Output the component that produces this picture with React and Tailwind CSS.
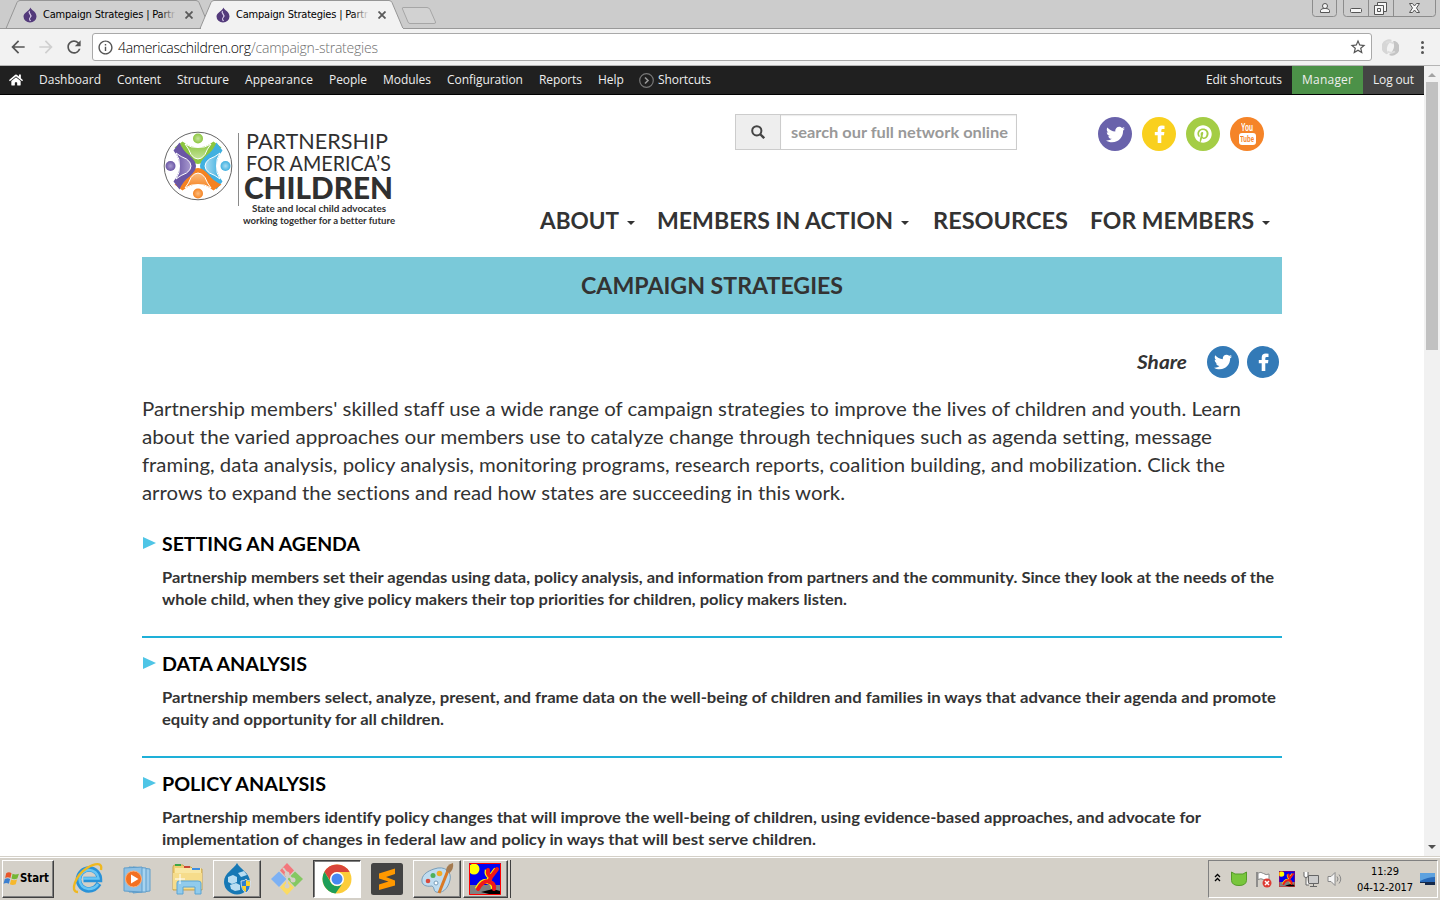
import { useLayoutEffect, useRef } from "react";
import { FaTwitter, FaPinterest, FaHome } from "react-icons/fa";
import { MdRefresh, MdArrowBack, MdArrowForward, MdStarBorder, MdInfoOutline } from "react-icons/md";

/* A single line of text whose tracking is adjusted to fill a given width. */
function Fit({ w, children, className = "" }) {
  const ref = useRef(null);
  useLayoutEffect(() => {
    const el = ref.current;
    el.style.letterSpacing = "0px";
    const natural = el.getBoundingClientRect().width;
    const gap = (w - natural) / (children.length - 1);
    el.style.letterSpacing = `${gap}px`;
    el.style.marginRight = `${-gap}px`;
  }, [w, children]);
  return (
    <span ref={ref} className={`inline-block whitespace-pre ${className}`}>
      {children}
    </span>
  );
}

/* A single line of text whose letters are widened or narrowed to a given width. */
function Stretch({ w, children, className = "" }) {
  const ref = useRef(null);
  useLayoutEffect(() => {
    const el = ref.current;
    el.style.transform = "none";
    const natural = el.getBoundingClientRect().width;
    el.style.transform = `scaleX(${w / natural})`;
    el.style.marginRight = `${w - natural}px`;
  }, [w, children]);
  return (
    <span ref={ref} className={`inline-block origin-left whitespace-pre shrink-0 [font-variant-ligatures:none] ${className}`}>
      {children}
    </span>
  );
}

const TAHOMA = "font-['DejaVu_Sans_Condensed','DejaVu_Sans',sans-serif]";

function Drop() {
  return (
    <svg className="shrink-0" width="14" height="16" viewBox="0 0 14 16">
      <path d="M7.500 0.500C8 3 13.500 4.500 13.500 9.500A6.500 6 0 0 1 .5 9.500C.5 5.500 6 4.500 7.500 .5z" fill="#533a7b" />
      <path d="M6.500 4C4.500 6.500 9.500 7.500 7.500 10S6.500 12 7.500 14" fill="none" stroke="#d9cdea" strokeWidth="1.200" />
    </svg>
  );
}

function TabLabel({ tone }) {
  return (
    <div className="flex h-full w-[190px] items-center pl-[14px]">
      <Drop />
      <div className={`relative ml-1.5 h-4 w-[133px] shrink-0 overflow-hidden text-[11px] leading-4 text-black ${TAHOMA}`}>
        <Fit w={132}>Campaign Strategies | Partr</Fit>
        <div className={`absolute right-0 top-0 h-4 w-4 bg-gradient-to-r from-transparent ${tone}`} />
      </div>
      <svg className="ml-[9px] shrink-0" width="8" height="8" viewBox="0 0 8 8">
        <path d="M.5.5l7 7M7.500.5l-7 7" stroke="#5a5a5a" strokeWidth="1.800" />
      </svg>
    </div>
  );
}

function Browser() {
  return (
    <>
      <div className="relative h-[29px] shrink-0 bg-[#cccccc]">
        <svg className="absolute inset-0" width="1440" height="29" viewBox="0 0 1440 29">
          <path d="M0 28.500H1440" stroke="#999" />
          <path d="M6 28.500L17 2.500Q18 .5 20 .5H196Q198 .5 199 2.500L210 28.500z" fill="#d0d0d0" stroke="#969696" />
          <path d="M200 28.500L211 2.500Q212 .5 214 .5H389Q391 .5 392 2.500L403 28.500z" fill="#f2f2f2" stroke="#969696" />
          <path d="M201 28.500H403" stroke="#f2f2f2" />
          <path d="M403 7.500H427Q429 7.500 430 9.500L435.500 22Q436 23.500 434 23.500H410Q408.500 23.500 408 22L402.500 9Q402 7.500 403 7.500z" fill="#d2d2d2" stroke="#a6a6a6" />
          <g fill="none" stroke="#8c8c8c">
            <path d="M1312.500 0V13.500Q1312.500 16.500 1315.500 16.500H1333.500Q1336.500 16.500 1336.500 13.500V0" />
            <path d="M1343.500 0V13.500Q1343.500 16.500 1346.500 16.500H1432.500Q1435.500 16.500 1435.500 13.500V0M1368.500 0V16.500M1393.500 0V16.500" />
          </g>
          <g fill="#f6f6f6" stroke="#555">
            <path d="M1320.500 12.500V10.500Q1321 8.500 1324 8.500H1326Q1329 8.500 1329.500 10.500V12.500z" />
            <circle cx="1325" cy="6" r="2.500" />
            <rect x="1350.500" y="8.500" width="11" height="4" rx="1" />
            <path d="M1377.500 2.500h9v9h-9z" />
            <path d="M1374.500 5.500h9v9h-9zM1377.500 8.500h3v3h-3z" />
            <path d="M1409.500 3.500h3l2 2.500 2-2.500h3l-3 4.500 3 4.500h-3l-2-2.500-2 2.500h-3l3-4.500z" />
          </g>
        </svg>
        <div className="relative flex h-[29px] pl-[9px]">
          <div className="w-[193px]"><TabLabel tone="to-[#d0d0d0]" /></div>
          <TabLabel tone="to-[#f2f2f2]" />
        </div>
      </div>
      <div className="flex h-[37px] shrink-0 items-center border-b border-[#b5b5b5] bg-[#f2f2f2] text-[#555]">
        <MdArrowBack className="ml-2 size-5" />
        <MdArrowForward className="ml-2 size-5 text-[#cfcfcf]" />
        <MdRefresh className="ml-2 size-5" />
        <div className="ml-2 flex h-7 w-[1280px] items-center rounded-[3px] border border-[#a9a9a9] bg-white pl-1 font-['Open_Sans',sans-serif] text-[14px] font-light">
          <MdInfoOutline className="size-[17px]" />
          <Fit w={133} className="ml-1 text-black">4americaschildren.org</Fit>
          <Fit w={127} className="text-[#6f6f6f]">/campaign-strategies</Fit>
          <MdStarBorder className="ml-auto mr-1 size-[18px]" />
        </div>
        <svg className="ml-[10px]" width="17" height="17" viewBox="0 0 17 17">
          <path d="M10 1A7.500 7.500 0 0 0 4 15Q6 15.500 6 14Q2.500 8 10 1z" fill="#d6d6d6" />
          <path d="M7 16A7.500 7.500 0 0 0 13 2Q11 1.500 11 3Q14.500 9 7 16z" fill="#c4c4c4" />
          <path d="M4 4Q8 2 11.500 4.500M13 12.500Q9 15 5.500 12.500" fill="none" stroke="#dcdcdc" strokeWidth="2" />
        </svg>
        <div className="ml-[22px] flex flex-col gap-[2px]">
          <i className="size-[3px] rounded-full bg-[#555]" />
          <i className="size-[3px] rounded-full bg-[#555]" />
          <i className="size-[3px] rounded-full bg-[#555]" />
        </div>
      </div>
    </>
  );
}

const ADMIN = [
  ["Dashboard", 62],
  ["Content", 44],
  ["Structure", 52],
  ["Appearance", 68],
  ["People", 38],
  ["Modules", 48],
  ["Configuration", 76],
  ["Reports", 43],
  ["Help", 26],
];

function AdminBar() {
  return (
    <div className="flex h-[29px] items-center border-b border-black bg-[#202020] font-['Open_Sans',sans-serif] text-[12px] text-[#eeeeee]">
      <FaHome className="ml-[9px] size-[14px] text-white" />
      {ADMIN.map(([label, w]) => (
        <Fit key={label} w={w} className="ml-4">{label}</Fit>
      ))}
      <svg className="ml-[15px]" width="15" height="15" viewBox="0 0 15 15" fill="none" stroke="#777">
        <circle cx="7.500" cy="7.500" r="6.800" strokeWidth="1.200" />
        <path d="M6 4.500l3 3L6 10.500" stroke="#999" strokeWidth="1.600" />
      </svg>
      <Fit w={53} className="ml-1">Shortcuts</Fit>
      <Fit w={76} className="ml-auto">Edit shortcuts</Fit>
      <div className="ml-[10px] flex h-full w-[71px] items-center justify-center bg-[#4c9148]"><Fit w={51}>Manager</Fit></div>
      <div className="flex h-full w-[61px] items-center justify-center bg-[#444]"><Fit w={41}>Log out</Fit></div>
    </div>
  );
}

function Figure({ turn, id, dark, light }) {
  return (
    <g transform={`rotate(${turn} 35 35)`}>
      <defs>
        <radialGradient id={id}>
          <stop offset="0" stopColor={light} />
          <stop offset="1" stopColor={dark} />
        </radialGradient>
        <linearGradient id={`${id}-body`} x1="0" y1="0" x2="0" y2="1">
          <stop offset="0" stopColor={dark} />
          <stop offset="1" stopColor={light} />
        </linearGradient>
      </defs>
      <circle cx="35" cy="7.500" r="5" fill={`url(#${id})`} />
      <path d="M19.500 10.500Q28 17 35 16Q42 17 50.500 10.500L58.500 16.500Q50 20 46 26Q40 33 35 33Q30 33 24 26Q20 20 11.500 16.500z" fill={dark} />
      <path d="M22 13Q28 17 35 16.500Q42 17 48 13Q44 18 42 23.500Q39 28 35 28Q31 28 28 23.500Q26 18 22 13z" fill={`url(#${id}-body)`} stroke="#fff" strokeWidth="1" />
    </g>
  );
}

function Logo() {
  return (
    <div className="flex pl-[21px] font-['Lato',sans-serif] text-[#303030]">
      <svg className="mt-[36px]" width="70" height="70" viewBox="0 0 70 70">
        <circle cx="35" cy="35" r="33.800" fill="#fff" stroke="#666" />
        <Figure turn={0} id="top" dark="#8cc63f" light="#c5e39b" />
        <Figure turn={90} id="right" dark="#3fb0e0" light="#a9dcf2" />
        <Figure turn={180} id="bottom" dark="#f58220" light="#fbbd80" />
        <Figure turn={270} id="left" dark="#6a56a5" light="#a99bd0" />
      </svg>
      <div className="ml-[5px] mt-[38px] h-[73px] w-px bg-[#8a8a8a]" />
      <div className="ml-1 flex w-[153px] flex-col items-start pt-[34px]">
        <Stretch w={142} className="ml-[3px] h-[23px] text-[22px] leading-[23px]">PARTNERSHIP</Stretch>
        <Stretch w={145} className="ml-[3px] h-[22px] text-[22px] leading-[22px]">FOR AMERICA’S</Stretch>
        <Stretch w={149} className="ml-px h-[26px] text-[30px] font-black leading-[26px]">CHILDREN</Stretch>
        <Stretch w={134} className="ml-[9px] mt-0.5 h-3 text-[10px] font-bold leading-3">State and local child advocates</Stretch>
        <Stretch w={152} className="h-3 text-[10px] font-bold leading-3">working together for a better future</Stretch>
      </div>
    </div>
  );
}

function Caret() {
  return <i className="ml-2 mt-[3px] border-x-4 border-t-4 border-x-transparent border-t-[#333]" />;
}

function Facebook() {
  return (
    <svg width="11" height="19" viewBox="0 0 11 19">
      <path d="M10.500.8V4H8.700Q7.300 4 7.300 5.400V7H10.400L10 10.300H7.300V18H3.700V10.300H.8V7H3.700V4.700Q3.700.6 8 .6z" fill="currentColor" />
    </svg>
  );
}

function Header() {
  return (
    <div className="flex h-[162px]">
      <Logo />
      <div className="ml-auto flex w-[742px] flex-col">
        <div className="flex h-14 items-start pt-[19px]">
          <div className="ml-[195px] flex h-9 w-[282px] border border-[#ccc] bg-white">
            <div className="flex w-[45px] items-center justify-center border-r border-[#ccc] bg-[#eee]">
              <svg width="14" height="14" viewBox="0 0 14 14" fill="none" stroke="#444" strokeWidth="2">
                <circle cx="5.800" cy="5.800" r="4.600" />
                <path d="M9 9l4.200 4.200" strokeWidth="2.400" />
              </svg>
            </div>
            <div className="flex grow items-center pl-[10px] font-['Lato',sans-serif] text-[15px] font-bold text-[#999] shadow-[inset_0_1px_1px_rgba(0,0,0,0.08)]">
              <Stretch w={217}>search our full network online</Stretch>
            </div>
          </div>
          <div className="ml-[81px] mt-[3px] flex gap-[10px] text-white">
            <div className="flex size-[34px] items-center justify-center rounded-full bg-[#6962ab]"><FaTwitter className="size-[19px]" /></div>
            <div className="flex size-[34px] items-center justify-center rounded-full bg-[#f9d01e]"><Facebook /></div>
            <div className="flex size-[34px] items-center justify-center rounded-full bg-[#a4cd45]"><FaPinterest className="size-[18px]" /></div>
            <div className="flex size-[34px] flex-col items-center rounded-full bg-[#f58428] pt-[6px] font-['Liberation_Sans',sans-serif] font-bold">
              <Stretch w={12} className="h-[10px] text-[10px] leading-[10px]">You</Stretch>
              <div className="flex h-[12px] w-[17px] items-center justify-center rounded-[3px] bg-white text-[9.5px] leading-[12px] text-[#f58428]"><Stretch w={14}>Tube</Stretch></div>
            </div>
          </div>
        </div>
        <div className="mt-[55px] flex h-[30px] items-center font-['Lato',sans-serif] text-[22px] font-bold leading-[30px] text-[#333]">
          <Stretch w={79}>ABOUT</Stretch><Caret />
          <Stretch w={236} className="ml-[22px]">MEMBERS IN ACTION</Stretch><Caret />
          <Stretch w={135} className="ml-6">RESOURCES</Stretch>
          <Stretch w={164} className="ml-[22px]">FOR MEMBERS</Stretch><Caret />
        </div>
      </div>
    </div>
  );
}

const INTRO = [
  ["Partnership members' skilled staff use a wide range of campaign strategies to improve the lives of children and youth. Learn", 1099],
  ["about the varied approaches our members use to catalyze change through techniques such as agenda setting, message", 1070],
  ["framing, data analysis, policy analysis, monitoring programs, research reports, coalition building, and mobilization. Click the", 1083],
  ["arrows to expand the sections and read how states are succeeding in this work.", 703],
];

const SECTIONS = [
  {
    title: "SETTING AN AGENDA", w: 198,
    lines: [
      ["Partnership members set their agendas using data, policy analysis, and information from partners and the community. Since they look at the needs of the", 1112],
      ["whole child, when they give policy makers their top priorities for children, policy makers listen.", 685],
    ],
  },
  {
    title: "DATA ANALYSIS", w: 145,
    lines: [
      ["Partnership members select, analyze, present, and frame data on the well-being of children and families in ways that advance their agenda and promote", 1114],
      ["equity and opportunity for all children.", 282],
    ],
  },
  {
    title: "POLICY ANALYSIS", w: 164,
    lines: [
      ["Partnership members identify policy changes that will improve the well-being of children, using evidence-based approaches, and advocate for", 1039],
      ["implementation of changes in federal law and policy in ways that will best serve children.", 654],
    ],
  },
];

function Section({ title, w, lines }) {
  return (
    <div className="h-[120px] border-b-2 border-[#1eb0d8] pt-[14px]">
      <div className="flex h-[25px] items-center text-[18px] font-bold leading-[25px] text-black">
        <i className="mb-[3px] ml-px mr-[6px] border-y-[6.5px] border-l-[13px] border-y-transparent border-l-[#4fc5e6]" />
        <Stretch w={w}>{title}</Stretch>
      </div>
      <div className="mt-[9px] flex flex-col items-start pl-5 text-[15px] font-bold leading-[22px] text-[#333]">
        {lines.map(([t, lw]) => <Stretch key={t} w={lw}>{t}</Stretch>)}
      </div>
    </div>
  );
}

function Page() {
  return (
    <div className="h-[790px] w-[1424px] overflow-hidden bg-white">
      <AdminBar />
      <div className="mx-auto w-[1140px] font-['Lato',sans-serif]">
        <Header />
        <div className="flex h-[57px] items-center justify-center bg-[#7ac9d9] text-[22px] font-bold text-[#333]">
          <Stretch w={262}>CAMPAIGN STRATEGIES</Stretch>
        </div>
        <div className="mt-8 flex h-8 items-center justify-end pr-[3px] text-white">
          <div className="mr-5 pt-0.5 text-[18.5px] font-bold italic text-[#333]"><Stretch w={50}>Share</Stretch></div>
          <div className="mr-2 flex size-8 items-center justify-center rounded-full bg-[#337ab7]"><FaTwitter className="size-[18px]" /></div>
          <div className="flex size-8 items-center justify-center rounded-full bg-[#337ab7]"><Facebook /></div>
        </div>
        <div className="mt-[17px] flex flex-col items-start text-[19.5px] leading-7 text-[#333]">
          {INTRO.map(([t, w]) => <Stretch key={t} w={w}>{t}</Stretch>)}
        </div>
        <div className="mt-[11px]">
          {SECTIONS.map((s) => <Section key={s.title} {...s} />)}
        </div>
      </div>
    </div>
  );
}

function Scrollbar() {
  return (
    <div className="flex w-4 flex-col items-center justify-between bg-[#f1f1f1]">
      <div className="flex flex-col items-center">
        <i className="mb-[5px] mt-[7px] border-x-4 border-b-4 border-x-transparent border-b-[#a3a3a3]" />
        <div className="h-[268px] w-3 bg-[#c1c1c1]" />
      </div>
      <i className="mb-[7px] border-x-4 border-t-4 border-x-transparent border-t-[#505050]" />
    </div>
  );
}

const RAISED = "border border-b-[#404040] border-l-white border-r-[#404040] border-t-white bg-[#d4d0c8] shadow-[inset_-1px_-1px_0_#808080]";

function Runner({ size }) {
  return (
    <svg className="shrink-0" width={size} height={size} viewBox="0 0 32 32">
      <path d="M0 0h32v32H0z" fill="#0000f0" />
      <path d="M0 22h32v10H0z" fill="#808080" />
      <path d="M12 29L24 26L31 28V31H20z" fill="#000" />
      <circle cx="5" cy="6" r="5.500" fill="#ff0" />
      <path d="M18 7Q17 12 21 14L27 6M21 14L19 19Q25 20 24 26M19 18Q12 17 8 26" fill="none" stroke="#ff0" strokeWidth="4.500" />
      <path d="M19 7Q18 12 22 14L28 6M22 14L20 19Q26 20 25 26M20 18Q13 18 9 26" fill="none" stroke="#f01818" strokeWidth="4" strokeLinecap="round" strokeLinejoin="round" />
      <path d="M.5.5h31v31H.5z" fill="none" stroke="#f00" />
    </svg>
  );
}

function Flag() {
  return (
    <svg className="shrink-0" width="17" height="16" viewBox="0 0 16 15">
      <path d="M3 2Q5.500.5 8 2L7 6.500Q4.500 5 2 6.500z" fill="#e8562a" />
      <path d="M9 2.500Q11.500 4 15 2.500L13.500 7Q10.500 8.500 8 7z" fill="#74b735" />
      <path d="M1.700 7.500Q4.300 6 6.700 7.500L5.500 12Q3 10.500.5 12z" fill="#3c80d0" />
      <path d="M7.700 8Q10.500 9.500 13.200 8L12 12.500Q9 14 6.500 12.500z" fill="#f6b82c" />
    </svg>
  );
}

function Taskbar() {
  return (
    <div className="relative flex h-11 shrink-0 items-start border-t border-[#d4d0c8] bg-[#d4d0c8] shadow-[inset_0_1px_0_#fff]">
      <div className={`ml-[2px] mt-[3px] flex h-[38px] w-[52px] items-center ${RAISED} ${TAHOMA}`}>
        <Flag />
        <Stretch w={29} className="text-[11.5px] font-bold text-black">Start</Stretch>
      </div>
      <div className="ml-[17px] flex h-[43px] items-center">
        <svg width="34" height="34" viewBox="0 0 34 34">
          <path d="M28 21.500Q24 28 17.500 28A10.500 10.500 0 1 1 28.500 17.500H12.500" fill="none" stroke="#2992d8" strokeWidth="5.500" />
          <path d="M27 22Q24 27 17.500 27A9.500 9.500 0 1 1 27.500 16.500H12" fill="none" stroke="#68c6f4" strokeWidth="2.500" />
          <path d="M7 30C-2 30 5 13 16 6C24 1 32 0 30 8" fill="none" stroke="#efb820" strokeWidth="2.400" />
        </svg>
      </div>
      <div className="ml-[18px] flex h-[44px] items-center">
        <svg width="29" height="29" viewBox="0 0 29 29">
          <path d="M10 2L27 4V26L10 28z" fill="#9fcbea" stroke="#5f9dca" />
          <path d="M6 2L23 3V27L6 27z" fill="#a8d4f0" stroke="#5f9dca" />
          <path d="M1 3L19 2V27L1 26z" fill="#8fc1e5" stroke="#5f9dca" />
          <circle cx="10.500" cy="14" r="8" fill="#f37021" stroke="#fbb27d" />
          <path d="M8 9.500V18.500L15.500 14z" fill="#fff" />
        </svg>
      </div>
      <div className="ml-[19px] flex h-[44px] items-center">
        <svg width="33" height="32" viewBox="0 0 33 32">
          <path d="M2 4Q2 2 4 2H12L14 4H20L22 6H31V27H2z" fill="#f0cf72" stroke="#c9a44c" />
          <path d="M4 5H30V25H4z" fill="#f9e7a4" />
          <path d="M4 2H10" stroke="#3ba648" strokeWidth="2" />
          <path d="M13 4H19" stroke="#c94536" strokeWidth="2" />
          <path d="M21 6H29" stroke="#3d8de0" strokeWidth="2" />
          <path d="M2 10H31V26H2z" fill="#f6dc8b" />
          <path d="M6 31V20Q6 18 8 18H27Q30 18 30 20V31H24V24H12V31z" fill="#91cbec" stroke="#5ba4d4" />
          <path d="M9 11V21M4 16H14" stroke="#fff" />
        </svg>
      </div>
      <div className={`ml-[9px] mt-[3px] flex h-[38px] w-[48px] items-center justify-center ${RAISED}`}>
        <svg width="28" height="32" viewBox="0 0 28 32">
          <path d="M14 0C17 6 27 10 27 19A13 12.500 0 0 1 1 19C1 10 11 6 14 0z" fill="#1678b5" />
          <path d="M5 14L10 12L14 14V19L9 21L5 19zM15 10L21 8L24 12L18 14zM7 22L13 20L17 22V27L12 28L8 26z" fill="#b8ddf2" />
          <path d="M18 18Q22 18 23 16Q24 18 27.500 18Q28 27 23 30Q18 27 18 18z" fill="#2c7ed0" stroke="#eee" strokeWidth=".8" />
          <path d="M23 17Q25 18.500 27 18.500V23H23zM23 23V29Q19.500 27 19 23z" fill="#fcd228" />
        </svg>
      </div>
      <div className="ml-[10px] flex h-[44px] items-center">
        <svg width="32" height="32" viewBox="0 0 32 32">
          <path d="M16 0L23 7.500L16 15L9 7.500z" fill="#f3777c" />
          <path d="M24 8.500L32 16L24 24L16.500 16z" fill="#84c862" />
          <path d="M8 8.500L15.500 16L8 24L0 16z" fill="#7db1f4" />
          <path d="M16 17L23 24.500L16 32L9 24.500z" fill="#fbdb63" />
          <path d="M12 5L16 10V23M16 11L22 17" fill="none" stroke="#d4d0c8" strokeWidth="2" />
          <g fill="#d4d0c8"><circle cx="16" cy="11" r="2.500" /><circle cx="22" cy="17" r="2.500" /><circle cx="16" cy="23" r="2.500" /></g>
        </svg>
      </div>
      <div className="ml-[10px] mt-[3px] flex h-[38px] w-[48px] items-center justify-center border border-b-white border-l-[#404040] border-r-white border-t-[#404040] bg-white shadow-[inset_1px_1px_0_#808080]">
        <svg width="30" height="30" viewBox="0 0 30 30">
          <circle cx="15" cy="15" r="14.500" fill="#fccd3b" />
          <path d="M2.400 7.800A14.500 14.500 0 0 1 27.600 8H15A7 7 0 0 0 8.500 17z" fill="#d9453a" />
          <path d="M2.400 7.800A14.500 14.500 0 0 0 13.500 29.400L20.500 19.500A7 7 0 0 1 8.900 18.500z" fill="#1e9e58" />
          <circle cx="15" cy="15" r="7" fill="#fff" />
          <circle cx="15" cy="15" r="5.500" fill="#4788f1" />
        </svg>
      </div>
      <div className="ml-[10px] flex h-[44px] items-center">
        <svg width="32" height="32" viewBox="0 0 32 32">
          <rect width="32" height="32" rx="2.500" fill="#434343" />
          <path d="M24 5.500V11L15 14L24 17.500V22.500L8 27V21.500L17.500 18.500L8 15.500V10.500z" fill="#ff9800" />
        </svg>
      </div>
      <div className={`ml-[10px] mt-[3px] flex h-[38px] w-[48px] items-center justify-center ${RAISED}`}>
        <svg width="33" height="32" viewBox="0 0 33 32">
          <path d="M13 6C24 2 31 9 29 17C27 26 21 31 15 29C12 28 14 24 11 23C5 24 0 22 1 16C2 11 7 8 13 6z" fill="#bfdcf0" stroke="#789db9" />
          <circle cx="7" cy="18" r="2.300" fill="#d84a3c" /><circle cx="12" cy="12.500" r="2.500" fill="#4fb05a" /><circle cx="18.500" cy="10.500" r="2.800" fill="#f2ab28" /><circle cx="15" cy="20" r="2" fill="#fff" stroke="#789db9" />
          <path d="M28 5L18 30" stroke="#d97a26" strokeWidth="3" />
          <path d="M25 8Q25 2 32 0Q33 6 28.500 10z" fill="#a47a50" />
        </svg>
      </div>
      <div className={`ml-[2px] mt-[3px] flex h-[38px] w-[45px] items-center pl-[5px] ${RAISED}`}><Runner size={32} /></div>
      <div className="mt-[3px] h-[38px] w-[3px] border-r border-[#404040] bg-[#dedad3]" />

      <div className={`ml-auto mr-[2px] mt-[3px] flex h-[38px] w-[230px] items-center border border-b-white border-l-[#808080] border-r-white border-t-[#808080] ${TAHOMA}`}>
        <svg className="ml-[5px] mb-1" width="7" height="9" viewBox="0 0 7 9" fill="none" stroke="#000" strokeWidth="1.300"><path d="M1 4l2.500-2.500L6 4M1 8l2.500-2.500L6 8" /></svg>
        <svg className="ml-[9px]" width="18" height="16" viewBox="0 0 18 16"><path d="M1.500 1L5 3H13L16.500 1V9.500Q16 14.500 9 14.500Q2 14.500 1.500 9.500z" fill="#78c63c" stroke="#549b28" /></svg>
        <svg className="ml-[7px]" width="17" height="17" viewBox="0 0 17 17">
          <path d="M2 1V16" stroke="#777" strokeWidth="1.500" /><path d="M3 2Q6 .5 8.500 2.500T14 3V9Q11 10 8.500 8.500T3 8.500z" fill="#fff" stroke="#888" />
          <circle cx="12" cy="12" r="4.500" fill="#dd3a32" /><path d="M10 10l4 4M14 10l-4 4" stroke="#fff" strokeWidth="1.500" />
        </svg>
        <div className="ml-[7px]"><Runner size={16} /></div>
        <svg className="ml-[8px]" width="17" height="17" viewBox="0 0 17 17" fill="#d4d0c8" stroke="#666"><path d="M5.500 4.500H15.500V12.500H5.500z" fill="#ccc" /><path d="M7 15.500H14M10.500 13V15" /><path d="M1 1V5Q1 6.500 3 6.500Q5 6.500 5 5V1M3 6.500V14H6" fill="#fff" /></svg>
        <svg className="ml-[7px]" width="17" height="16" viewBox="0 0 17 16" fill="none" stroke="#888"><path d="M1 5.500H4L8 1.500V14.500L4 10.500H1z" fill="#f5f5f5" /><path d="M10 5.500Q12 8 10 10.500M12 3.500Q15.500 8 12 12.500" /></svg>
        <div className="ml-[12px] flex w-[58px] flex-col items-center pt-px text-[11px] leading-4 text-black">
          <Fit w={28}>11:29</Fit>
          <Fit w={56}>04-12-2017</Fit>
        </div>
        <svg className="ml-[6px]" width="15" height="14" viewBox="0 0 15 14"><path d="M0 1H15V11H0z" fill="#2869b8" /><path d="M0 1H15V5Q8 5 0 9z" fill="#5ea2df" /><path d="M0 10H15V13H5V11H0z" fill="#15294a" /></svg>
      </div>
    </div>
  );
}

export default function App() {
  return (
    <div className="flex h-[900px] w-[1440px] flex-col overflow-hidden bg-white">
      <Browser />
      <div className="flex h-[790px] shrink-0">
        <Page />
        <Scrollbar />
      </div>
      <Taskbar />
    </div>
  );
}
